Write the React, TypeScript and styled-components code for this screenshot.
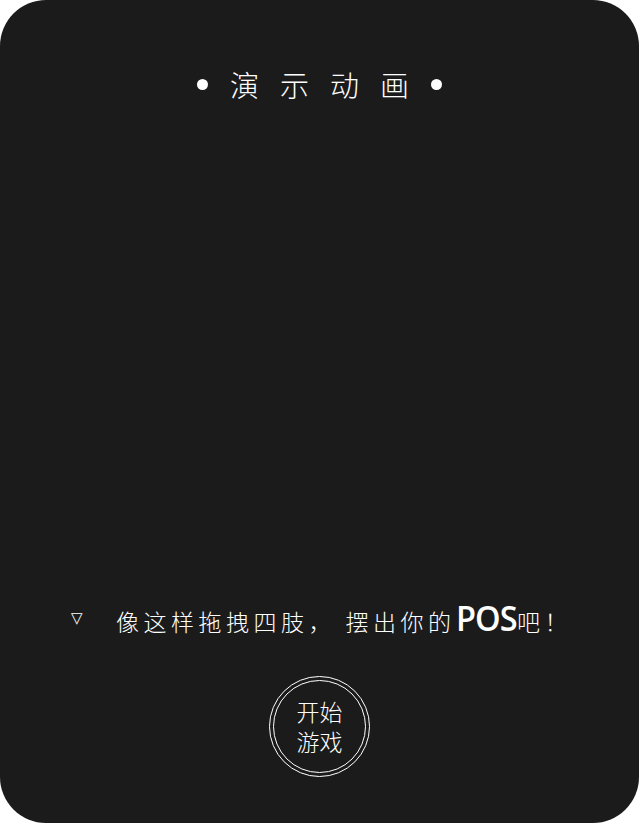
import React from "react";
import styled, { createGlobalStyle } from "styled-components";

const Global = createGlobalStyle`
  html, body { margin: 0; padding: 0; background: #ffffff; }
  body { font-family: "Noto Sans CJK SC", "Noto Sans", sans-serif; }
  * { box-sizing: border-box; }
`;

const Card = styled.div`
  width: 639px;
  height: 823px;
  background: #1b1b1b;
  border-radius: 46px;
  display: flex;
  flex-direction: column;
  align-items: center;
  color: #ffffff;
  overflow: hidden;
`;

const Title = styled.div`
  margin-top: 64px;
  height: 40px;
  display: flex;
  align-items: center;
  gap: 22px;
`;

const Dot = styled.span`
  width: 11px;
  height: 11px;
  border-radius: 50%;
  background: #ffffff;
  display: block;
`;

const TitleText = styled.span`
  font-size: 29px;
  font-weight: 300;
  letter-spacing: 21px;
  margin-right: -21px;
  line-height: 40px;
`;

const Stage = styled.div`
  flex: 1;
  width: 100%;
`;

const Hint = styled.div`
  width: 100%;
  display: flex;
  align-items: center;
  padding-left: 71px;
  height: 40px;
`;

const Triangle = styled.span`
  font-family: "DejaVu Sans", sans-serif;
  font-size: 15px;
  width: 45px;
  line-height: 1;
  margin-top: -2px;
`;

const HintText = styled.span`
  font-size: 23px;
  font-weight: 300;
  letter-spacing: 4.5px;
  line-height: 40px;
  display: flex;
  align-items: baseline;
  white-space: pre;
`;

const Pos = styled.b`
  display: inline-block;
  font-family: "Open Sans", "Noto Sans", sans-serif;
  font-size: 35px;
  font-weight: 600;
  letter-spacing: -1px;
  transform: scaleX(0.93);
  transform-origin: left center;
  margin: 0 -4px 0 0;
`;

const StartButton = styled.button`
  margin-top: 37px;
  margin-bottom: 46px;
  width: 101px;
  height: 101px;
  border-radius: 50%;
  border: 1.5px solid #ffffff;
  background: transparent;
  padding: 3px;
  cursor: pointer;
  display: flex;
`;

const Inner = styled.span`
  flex: 1;
  border-radius: 50%;
  border: 1.5px solid #ffffff;
  display: flex;
  flex-direction: column;
  align-items: center;
  justify-content: center;
  color: #ffffff;
  font-family: "Noto Sans CJK SC", sans-serif;
  font-size: 23px;
  font-weight: 300;
  padding-bottom: 1px;
`;

const Line = styled.span`
  display: block;
  height: 30px;
  line-height: 30px;
`;

export default function App() {
  return (
    <>
      <Global />
      <Card>
        <Title>
          <Dot />
          <TitleText>演示动画</TitleText>
          <Dot />
        </Title>
        <Stage />
        <Hint>
          <Triangle>▽</Triangle>
          <HintText>
            {"像这样拖拽四肢， 摆出你的"}
            <Pos>POS</Pos>
            {"吧！"}
          </HintText>
        </Hint>
        <StartButton>
          <Inner>
            <Line>开始</Line>
            <Line>游戏</Line>
          </Inner>
        </StartButton>
      </Card>
    </>
  );
}
